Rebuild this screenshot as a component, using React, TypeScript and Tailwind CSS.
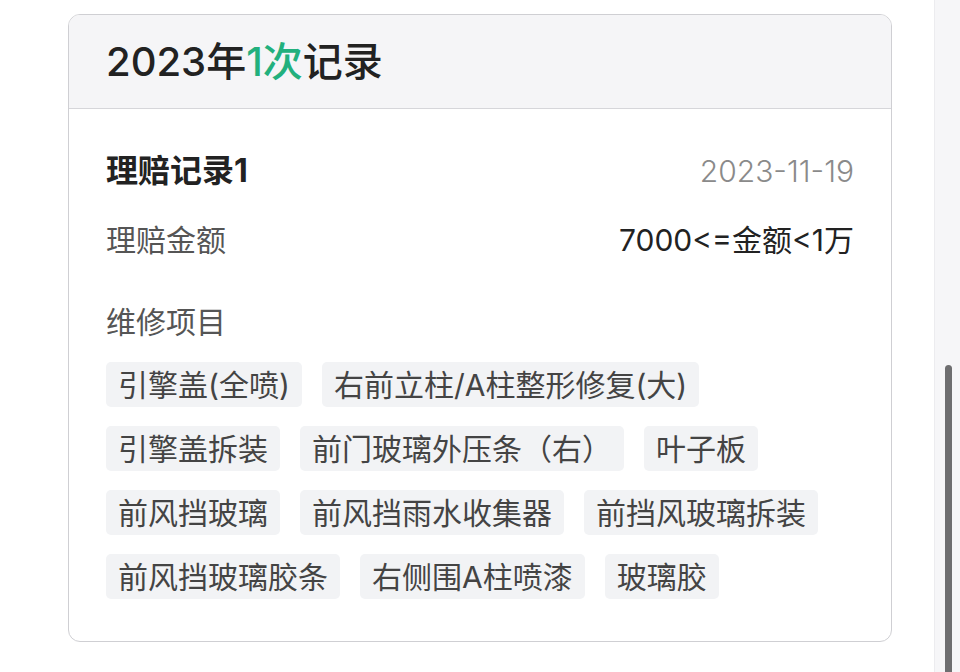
import React from "react";

const rows: string[][] = [
  ["引擎盖(全喷)", "右前立柱/A柱整形修复(大)"],
  ["引擎盖拆装", "前门玻璃外压条（右）", "叶子板"],
  ["前风挡玻璃", "前风挡雨水收集器", "前挡风玻璃拆装"],
  ["前风挡玻璃胶条", "右侧围A柱喷漆", "玻璃胶"],
];

const tags = rows.flat();

export default function App() {
  return (
    <div
      className="flex h-[672px] w-[960px] overflow-hidden bg-white"
      style={{ fontFamily: 'Inter, "Noto Sans CJK SC", sans-serif' }}
    >
      <div className="flex-1 pl-[68px] pr-[42px] pt-[14px]">
        <div className="overflow-hidden rounded-[12px] border border-[#cfcfd3] bg-white">
          <div className="flex h-[94px] items-center border-b border-[#d6d6da] bg-[#f5f5f7] pl-[37px] text-[40px] font-medium leading-none text-[#222]">
            <span>2023年</span>
            <span className="text-[#22b07d]">1次</span>
            <span>记录</span>
          </div>
          <div className="px-[37px] pb-[42px] pt-[42px]">
            <div className="flex h-[40px] items-center justify-between">
              <span className="text-[32px] font-bold text-[#222]">理赔记录1</span>
              <span className="text-[30px] font-light text-[#8a8a8a]">2023-11-19</span>
            </div>
            <div className="mt-[29px] flex h-[40px] items-center justify-between text-[30px]">
              <span className="text-[#555]">理赔金额</span>
              <span className="text-[#222]">7000&lt;=金额&lt;1万</span>
            </div>
            <div className="mt-[42px] flex h-[40px] items-center text-[30px] text-[#555]">维修项目</div>
            <div className="mt-[20px] flex flex-wrap gap-x-[20px] gap-y-[19px]">
              {tags.map((t) => (
                <span
                  key={t}
                  className="flex h-[45px] items-center rounded-[5px] bg-[#f2f3f5] px-[12px] text-[30px] leading-none text-[#444]"
                >
                  {t}
                </span>
              ))}
            </div>
          </div>
        </div>
      </div>
      <div className="flex w-[26px] flex-col border-l border-[#ececef] bg-[#f6f6f8] pl-[10px] pt-[365px]">
        <div className="w-[7px] flex-1 rounded-t-full bg-[#6e6e70]" />
      </div>
    </div>
  );
}
